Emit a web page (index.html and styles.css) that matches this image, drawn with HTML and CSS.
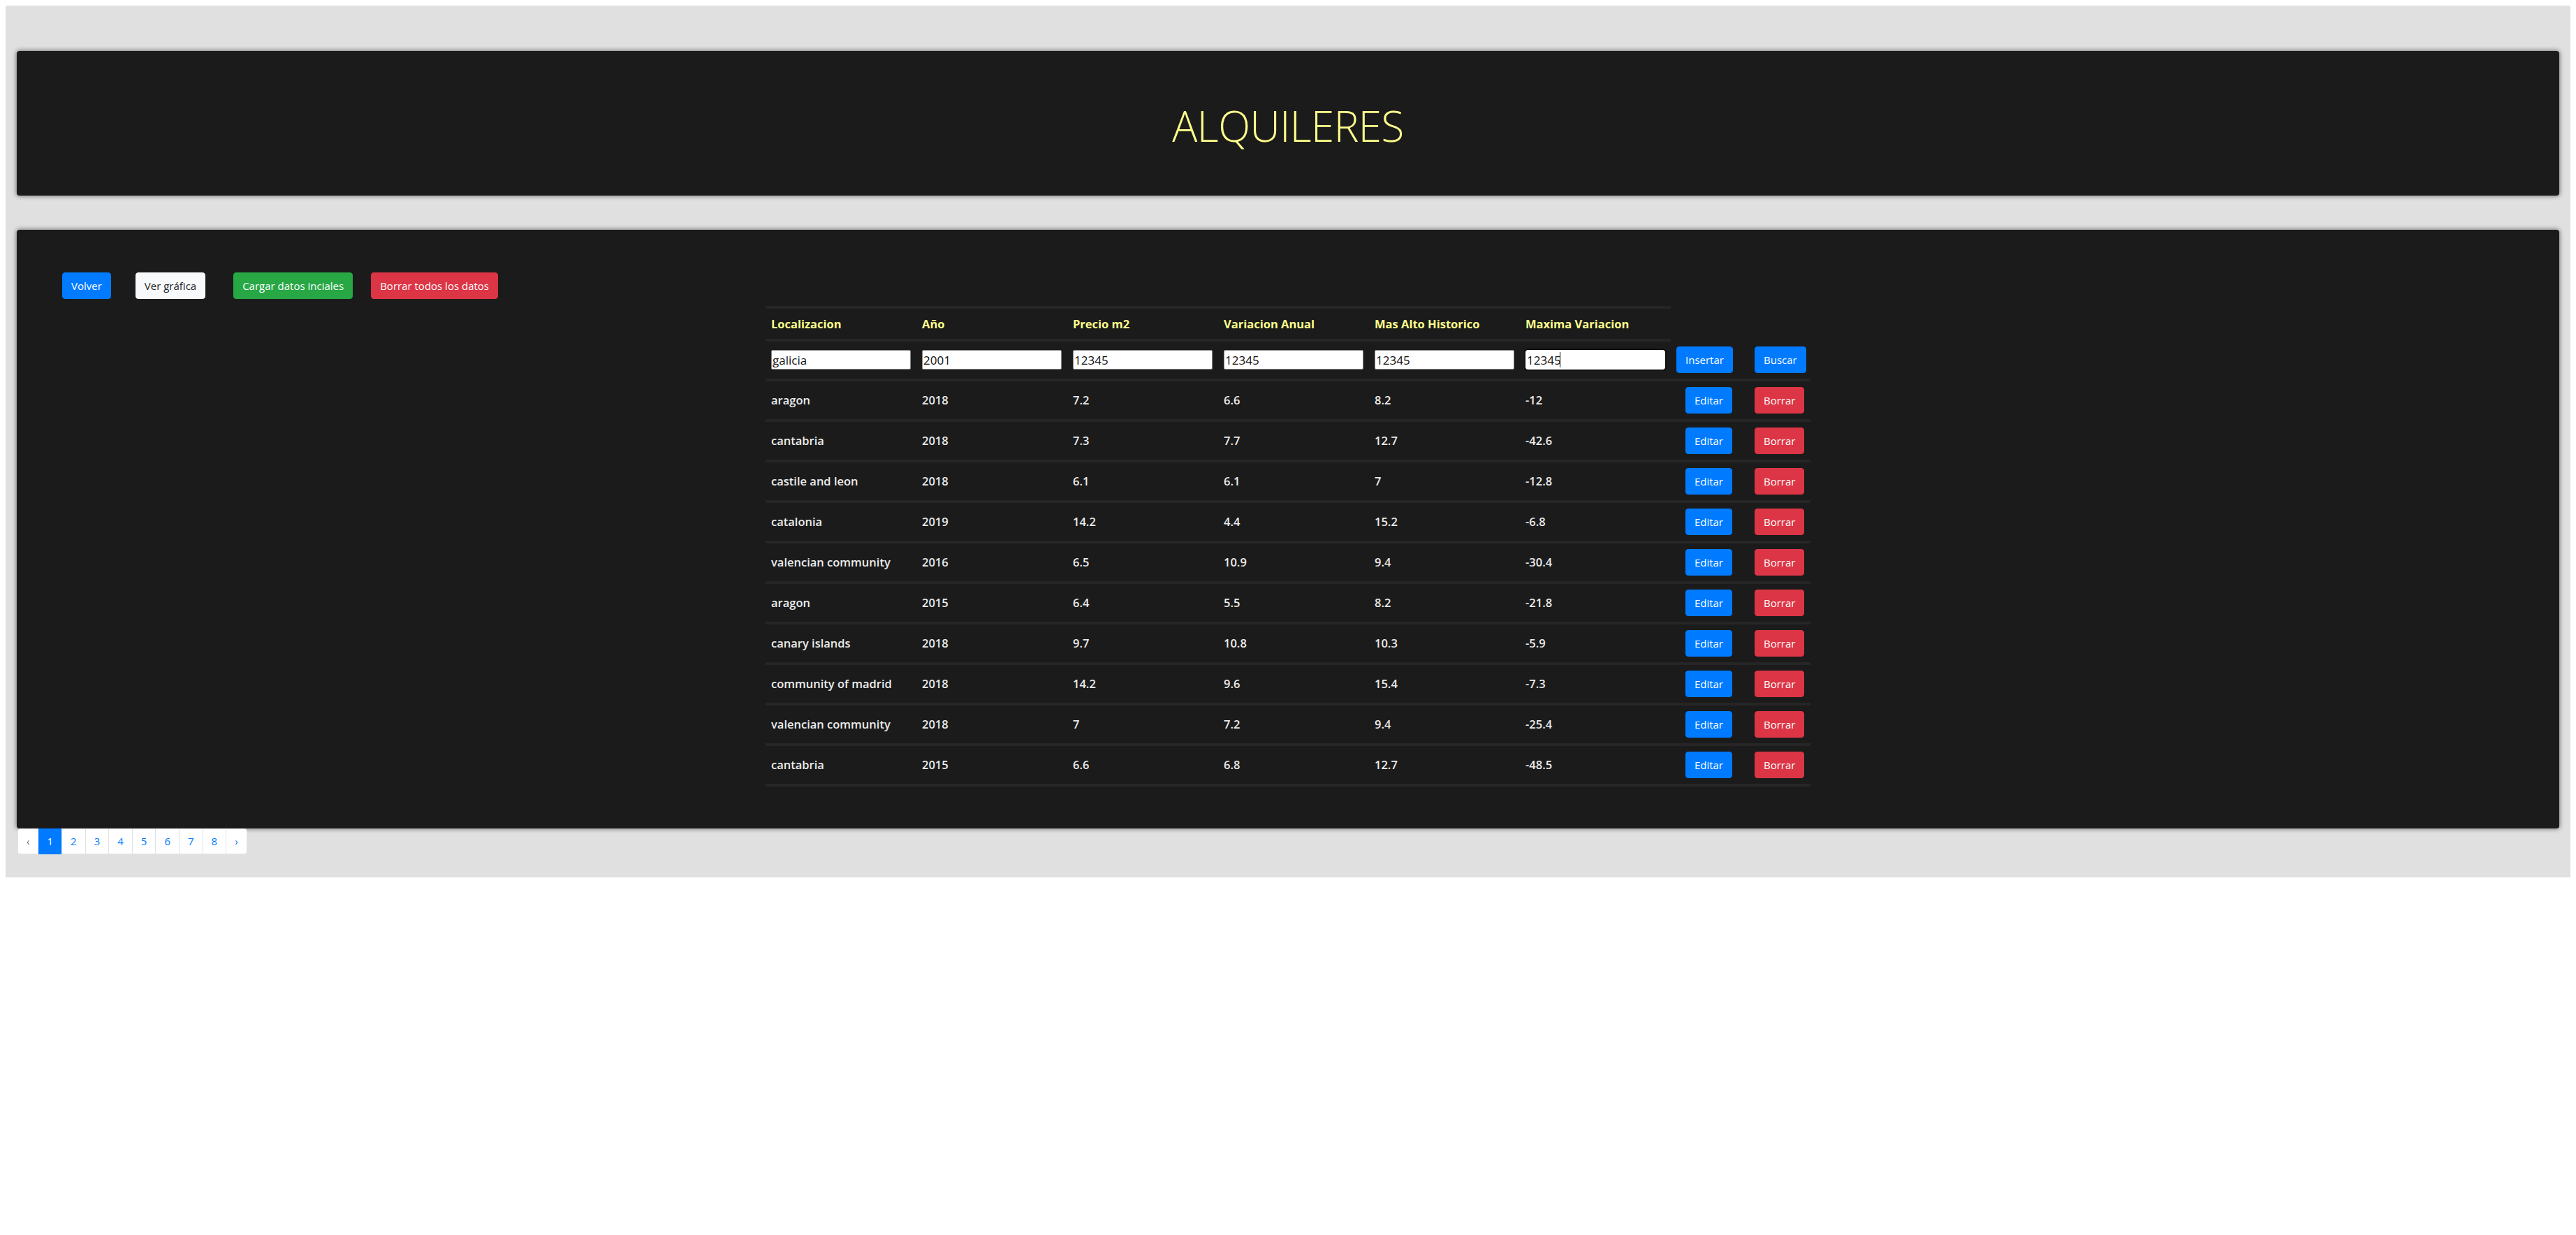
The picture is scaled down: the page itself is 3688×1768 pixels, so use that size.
FILE: index.html
```html
<!DOCTYPE html>
<html lang="es">
<head>
<meta charset="utf-8">
<title>Alquileres</title>
<link rel="stylesheet" href="styles.css">
</head>
<body>
<div class="page">
  <header class="card card-title">
    <h1 class="title">ALQUILERES</h1>
  </header>

  <main class="card card-main">
    <div class="toolbar">
      <button class="btn btn-primary gap-1">Volver</button>
      <button class="btn btn-light gap-2">Ver gráfica</button>
      <button class="btn btn-success gap-3">Cargar datos inciales</button>
      <button class="btn btn-danger">Borrar todos los datos</button>
    </div>

    <table class="data">
      <colgroup>
        <col class="c-data"><col class="c-data"><col class="c-data"><col class="c-data"><col class="c-data"><col class="c-data">
        <col class="c-act1"><col class="c-act2">
      </colgroup>
      <thead>
        <tr>
          <th>Localizacion</th>
          <th>Año</th>
          <th>Precio m2</th>
          <th>Variacion Anual</th>
          <th>Mas Alto Historico</th>
          <th>Maxima Variacion</th>
        </tr>
      </thead>
      <tbody>
        <tr class="row-input">
          <td><input class="field" type="text" value="galicia"></td>
          <td><input class="field" type="text" value="2001"></td>
          <td><input class="field" type="text" value="12345"></td>
          <td><input class="field" type="text" value="12345"></td>
          <td><input class="field" type="text" value="12345"></td>
          <td><span class="focus-wrap"><input class="field field-focus" type="text" value="12345"><span class="caret"></span></span></td>
          <td class="act1"><button class="btn btn-primary">Insertar</button></td>
          <td class="act2"><button class="btn btn-primary">Buscar</button></td>
        </tr>
        <tr><td>aragon</td><td>2018</td><td>7.2</td><td>6.6</td><td>8.2</td><td>-12</td><td class="act1"><button class="btn btn-primary">Editar</button></td><td class="act2"><button class="btn btn-danger">Borrar</button></td></tr>
        <tr><td>cantabria</td><td>2018</td><td>7.3</td><td>7.7</td><td>12.7</td><td>-42.6</td><td class="act1"><button class="btn btn-primary">Editar</button></td><td class="act2"><button class="btn btn-danger">Borrar</button></td></tr>
        <tr><td>castile and leon</td><td>2018</td><td>6.1</td><td>6.1</td><td>7</td><td>-12.8</td><td class="act1"><button class="btn btn-primary">Editar</button></td><td class="act2"><button class="btn btn-danger">Borrar</button></td></tr>
        <tr><td>catalonia</td><td>2019</td><td>14.2</td><td>4.4</td><td>15.2</td><td>-6.8</td><td class="act1"><button class="btn btn-primary">Editar</button></td><td class="act2"><button class="btn btn-danger">Borrar</button></td></tr>
        <tr><td>valencian community</td><td>2016</td><td>6.5</td><td>10.9</td><td>9.4</td><td>-30.4</td><td class="act1"><button class="btn btn-primary">Editar</button></td><td class="act2"><button class="btn btn-danger">Borrar</button></td></tr>
        <tr><td>aragon</td><td>2015</td><td>6.4</td><td>5.5</td><td>8.2</td><td>-21.8</td><td class="act1"><button class="btn btn-primary">Editar</button></td><td class="act2"><button class="btn btn-danger">Borrar</button></td></tr>
        <tr><td>canary islands</td><td>2018</td><td>9.7</td><td>10.8</td><td>10.3</td><td>-5.9</td><td class="act1"><button class="btn btn-primary">Editar</button></td><td class="act2"><button class="btn btn-danger">Borrar</button></td></tr>
        <tr><td>community of madrid</td><td>2018</td><td>14.2</td><td>9.6</td><td>15.4</td><td>-7.3</td><td class="act1"><button class="btn btn-primary">Editar</button></td><td class="act2"><button class="btn btn-danger">Borrar</button></td></tr>
        <tr><td>valencian community</td><td>2018</td><td>7</td><td>7.2</td><td>9.4</td><td>-25.4</td><td class="act1"><button class="btn btn-primary">Editar</button></td><td class="act2"><button class="btn btn-danger">Borrar</button></td></tr>
        <tr class="row-last"><td>cantabria</td><td>2015</td><td>6.6</td><td>6.8</td><td>12.7</td><td>-48.5</td><td class="act1"><button class="btn btn-primary">Editar</button></td><td class="act2"><button class="btn btn-danger">Borrar</button></td></tr>
      </tbody>
    </table>
  </main>

  <nav class="pagination">
    <span class="page-link page-first page-disabled">‹</span>
    <span class="page-link page-active">1</span>
    <span class="page-link">2</span>
    <span class="page-link">3</span>
    <span class="page-link">4</span>
    <span class="page-link">5</span>
    <span class="page-link">6</span>
    <span class="page-link">7</span>
    <span class="page-link">8</span>
    <span class="page-link page-last">›</span>
  </nav>
</div>
</body>
</html>
```

FILE: styles.css
```css
* { box-sizing: border-box; }

html, body {
  background: #ffffff;
}

body {
  margin: 8px;
  font-family: "Open Sans", "Noto Sans", "Liberation Sans", sans-serif;
  font-size: 16px;
  color: #212529;
}

.page {
  background: #e0e0e0;
  padding: 65px 16px 33px 16px;
}

.card {
  background: #1b1b1b;
  border-radius: 4px;
  box-shadow: 0 0 6px 1px rgba(0, 0, 0, 0.45);
}

.card-title {
  height: 207px;
  display: flex;
  align-items: center;
  justify-content: center;
  margin-bottom: 49px;
}

.title {
  margin: 0;
  font-family: "Open Sans", "Noto Sans", sans-serif;
  font-weight: 300;
  font-size: 60px;
  line-height: 1;
  color: #ffff8c;
  padding-top: 6px;
  letter-spacing: -0.5px;
}

.card-main {
  padding: 61px 65px 60px 65px;
}

.toolbar {
  display: flex;
  align-items: center;
  margin-bottom: 10px;
}

.gap-1 { margin-right: 35px; }
.gap-2 { margin-right: 40px; }
.gap-3 { margin-right: 26px; }

.btn {
  display: inline-block;
  font-family: "Open Sans", "Noto Sans", sans-serif;
  font-size: 15px;
  font-weight: 400;
  line-height: 24px;
  height: 38px;
  padding: 6px 12px;
  border: 1px solid transparent;
  border-radius: 4px;
  cursor: pointer;
  white-space: nowrap;
}

.btn-primary { background: #007bff; border-color: #007bff; color: #fff; }
.btn-light { background: #f8f9fa; border-color: #f8f9fa; color: #212529; }
.btn-success { background: #28a745; border-color: #28a745; color: #fff; }
.btn-danger { background: #dc3545; border-color: #dc3545; color: #fff; }

.data {
  margin: 0 auto;
  border-collapse: separate;
  border-spacing: 0;
  table-layout: fixed;
  width: 1496px;
  color: #ececec;
}

.c-data { width: 216px; }
.c-act1 { width: 96px; }
.c-act2 { width: 104px; }

.data th,
.data td {
  border-top: 4px solid #262626;
  padding: 8px;
  vertical-align: middle;
  text-align: left;
  white-space: nowrap;
}

.data th {
  font-weight: 700;
  font-size: 16.5px;
  line-height: 27px;
  color: #ffff8c;
  border-bottom: 4px solid #262626;
}

.data td {
  font-weight: 600;
  font-size: 16.5px;
  line-height: 24px;
}

.data .row-input td {
  border-top: 0;
  padding: 7px 8px 8px 8px;
}

.data .row-last td {
  border-bottom: 4px solid #262626;
}

.data td.act1 {
  text-align: right;
}

.data td.act2 {
  padding-left: 24px;
}

.field {
  width: 200px;
  height: 28px;
  border: 1px solid #8a8a8a;
  border-radius: 2px;
  background: #fff;
  padding: 1px 1px;
  font-family: "Open Sans", "Noto Sans", sans-serif;
  font-size: 17px;
  color: #111;
  display: block;
}

.focus-wrap {
  position: relative;
  display: block;
  width: 200px;
}

.field-focus {
  border: 1px solid #fff;
  outline: 2px solid #111;
  outline-offset: 0;
  border-radius: 3px;
}

.caret {
  position: absolute;
  left: 49px;
  top: 3px;
  width: 1px;
  height: 22px;
  background: #000;
}

.pagination {
  display: flex;
  padding-left: 1px;
}

.page-link {
  display: block;
  background: #fff;
  border: 1px solid #dee2e6;
  margin-left: -1px;
  padding: 8px 12px;
  line-height: 19px;
  font-size: 15px;
  color: #007bff;
}

.page-first {
  margin-left: 0;
  border-radius: 4px 0 0 4px;
}

.page-last {
  border-radius: 0 4px 4px 0;
}

.page-disabled {
  color: #6c757d;
}

.page-active {
  background: #007bff;
  border-color: #007bff;
  color: #fff;
}
```
